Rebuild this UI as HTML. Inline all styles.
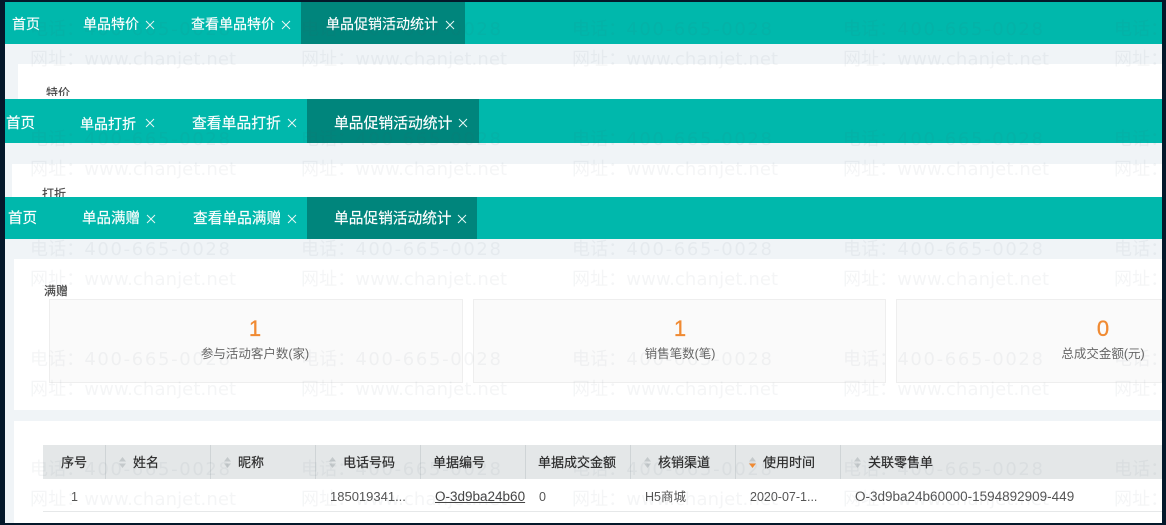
<!DOCTYPE html>
<html><head><meta charset="utf-8">
<style>
*{box-sizing:border-box;margin:0;padding:0}
html,body{width:1166px;height:525px;overflow:hidden;background:#04182a}
body{position:relative;font-family:"Liberation Sans","Noto Sans CJK SC",sans-serif;}
#wrap{position:absolute;left:0;top:0;width:1166px;height:525px;filter:blur(.35px)}
.b{position:absolute}
.t{position:absolute;white-space:nowrap;line-height:20px;-webkit-text-stroke:.15px currentColor}
.tab{color:#fff;font-size:14px;height:20px}
.x{position:absolute;width:10px;height:10px}
.x svg{display:block}
.wm{position:absolute;white-space:nowrap;font-family:"DejaVu Sans","Noto Sans CJK SC",sans-serif;font-size:18px;line-height:24px;color:rgba(60,80,100,.06);pointer-events:none;letter-spacing:.1px}
.wm span{letter-spacing:1.65px}
.th{position:absolute;top:445px;height:34px;border-right:1px solid #cfd4d6}
.h{position:absolute;font-size:13px;color:#2b2b2b;line-height:20px;white-space:nowrap;top:453px;-webkit-text-stroke:.2px currentColor}
.c{position:absolute;font-size:13.5px;color:#555;line-height:20px;white-space:nowrap;top:487px}
.card{position:absolute;top:299px;height:84px;background:#fafafa;border:1px solid #eeeeee}
.n{position:absolute;top:316px;font-size:22px;line-height:26px;color:#f08a32;white-space:nowrap;transform:translateX(-50%);-webkit-text-stroke:.3px currentColor}
.l{position:absolute;top:344px;font-size:12.5px;line-height:20px;color:#666;white-space:nowrap;transform:translateX(-50%)}
.s{position:absolute;width:7px;height:13px}
</style></head><body><div id="wrap">

<div class="b" style="left:5px;top:2px;width:1157px;height:521px;background:#f0f4f7"></div>

<!-- first layer -->
<div class="b" style="left:18px;top:64px;width:1144px;height:35px;background:#fff"></div>
<div class="t" style="left:46px;top:83px;font-size:12px;color:#444;height:13px;overflow:hidden">特价</div>
<div class="b" style="left:5px;top:2px;width:1157px;height:42px;background:#00b8ac"></div>
<div class="b" style="left:301px;top:2px;width:164px;height:42px;background:#00857c"></div>
<div class="t tab" style="left:12px;top:14px">首页</div>
<div class="t tab" style="left:83px;top:14px">单品特价</div>
<div class="t tab" style="left:191px;top:14px">查看单品特价</div>
<div class="t tab" style="left:326px;top:14px">单品促销活动统计</div>
<div class="x" style="left:145px;top:20px"><svg width="10" height="10"><path d="M1 1L9 9M9 1L1 9" stroke="#e6f7f5" stroke-width="1"/></svg></div>
<div class="x" style="left:281px;top:20px"><svg width="10" height="10"><path d="M1 1L9 9M9 1L1 9" stroke="#e6f7f5" stroke-width="1"/></svg></div>
<div class="x" style="left:445px;top:20px"><svg width="10" height="10"><path d="M1 1L9 9M9 1L1 9" stroke="#e6f7f5" stroke-width="1"/></svg></div>

<!-- second layer -->
<div class="b" style="left:12px;top:164px;width:1150px;height:33px;background:#fff"></div>
<div class="t" style="left:42px;top:184px;font-size:12px;color:#444;height:13px;overflow:hidden">打折</div>
<div class="b" style="left:5px;top:99px;width:1157px;height:44px;background:#00b8ac"></div>
<div class="b" style="left:307px;top:99px;width:172px;height:44px;background:#00857c"></div>
<div class="t tab" style="left:6px;top:114px;font-size:14.5px">首页</div>
<div class="t tab" style="left:80px;top:114px">单品打折</div>
<div class="t tab" style="left:192px;top:114px;font-size:14.8px">查看单品打折</div>
<div class="t tab" style="left:334px;top:114px;font-size:14.8px">单品促销活动统计</div>
<div class="x" style="left:145px;top:118px"><svg width="10" height="10"><path d="M1 1L9 9M9 1L1 9" stroke="#e6f7f5" stroke-width="1"/></svg></div>
<div class="x" style="left:287px;top:118px"><svg width="10" height="10"><path d="M1 1L9 9M9 1L1 9" stroke="#e6f7f5" stroke-width="1"/></svg></div>
<div class="x" style="left:458px;top:118px"><svg width="10" height="10"><path d="M1 1L9 9M9 1L1 9" stroke="#e6f7f5" stroke-width="1"/></svg></div>

<!-- third layer -->
<div class="b" style="left:14px;top:259px;width:1148px;height:151px;background:#fff"></div>
<div class="b" style="left:14px;top:421px;width:1148px;height:102px;background:#fff"></div>
<div class="t" style="left:44px;top:281px;font-size:12px;color:#444">满赠</div>
<div class="b" style="left:5px;top:197px;width:1157px;height:42px;background:#00b8ac"></div>
<div class="b" style="left:307px;top:197px;width:170px;height:42px;background:#00857c"></div>
<div class="t tab" style="left:8px;top:209px;font-size:14.5px">首页</div>
<div class="t tab" style="left:82px;top:209px;font-size:14.5px">单品满赠</div>
<div class="t tab" style="left:193px;top:209px;font-size:14.7px">查看单品满赠</div>
<div class="t tab" style="left:334px;top:209px;font-size:14.7px">单品促销活动统计</div>
<div class="x" style="left:146px;top:214px"><svg width="10" height="10"><path d="M1 1L9 9M9 1L1 9" stroke="#e6f7f5" stroke-width="1"/></svg></div>
<div class="x" style="left:287px;top:214px"><svg width="10" height="10"><path d="M1 1L9 9M9 1L1 9" stroke="#e6f7f5" stroke-width="1"/></svg></div>
<div class="x" style="left:457px;top:214px"><svg width="10" height="10"><path d="M1 1L9 9M9 1L1 9" stroke="#e6f7f5" stroke-width="1"/></svg></div>

<!-- cards -->
<div class="card" style="left:49px;width:414px"></div>
<div class="card" style="left:473px;width:413px"></div>
<div class="card" style="left:896px;width:266px"></div>
<div class="n" style="left:255px">1</div>
<div class="n" style="left:680px">1</div>
<div class="n" style="left:1103px">0</div>
<div class="l" style="left:255px">参与活动客户数(家)</div>
<div class="l" style="left:680px">销售笔数(笔)</div>
<div class="l" style="left:1103px">总成交金额(元)</div>

<!-- table -->
<div class="b" style="left:43px;top:445px;width:1119px;height:34px;background:#e4e7e8"></div>
<div class="th" style="left:43px;width:63px"></div>
<div class="th" style="left:106px;width:105px"></div>
<div class="th" style="left:211px;width:105px"></div>
<div class="th" style="left:316px;width:105px"></div>
<div class="th" style="left:421px;width:105px"></div>
<div class="th" style="left:526px;width:105px"></div>
<div class="th" style="left:631px;width:105px"></div>
<div class="th" style="left:736px;width:105px"></div>
<div class="b" style="left:43px;top:511px;width:1119px;height:1px;background:#e6e8e9"></div>

<div class="h" style="left:61px">序号</div>
<div class="h" style="left:133px">姓名</div>
<div class="h" style="left:238px">昵称</div>
<div class="h" style="left:343px">电话号码</div>
<div class="h" style="left:433px">单据编号</div>
<div class="h" style="left:538px">单据成交金额</div>
<div class="h" style="left:658px">核销渠道</div>
<div class="h" style="left:763px">使用时间</div>
<div class="h" style="left:868px">关联零售单</div>

<svg class="s" style="left:119px;top:456px" viewBox="0 0 7 13"><path d="M3.5 1L7 5.5H0Z" fill="#c4c9cb"/><path d="M3.5 12L0 7.500H7Z" fill="#c4c9cb"/></svg>
<svg class="s" style="left:224px;top:456px" viewBox="0 0 7 13"><path d="M3.5 1L7 5.5H0Z" fill="#c4c9cb"/><path d="M3.5 12L0 7.500H7Z" fill="#c4c9cb"/></svg>
<svg class="s" style="left:329px;top:456px" viewBox="0 0 7 13"><path d="M3.5 1L7 5.5H0Z" fill="#c4c9cb"/><path d="M3.5 12L0 7.500H7Z" fill="#c4c9cb"/></svg>
<svg class="s" style="left:644px;top:456px" viewBox="0 0 7 13"><path d="M3.5 1L7 5.5H0Z" fill="#c4c9cb"/><path d="M3.5 12L0 7.500H7Z" fill="#c4c9cb"/></svg>
<svg class="s" style="left:749px;top:456px" viewBox="0 0 7 13"><path d="M3.5 1L7 5.5H0Z" fill="#c4c9cb"/><path d="M3.5 12L0 7.500H7Z" fill="#f08a32"/></svg>
<svg class="s" style="left:854px;top:456px" viewBox="0 0 7 13"><path d="M3.5 1L7 5.5H0Z" fill="#c4c9cb"/><path d="M3.5 12L0 7.500H7Z" fill="#c4c9cb"/></svg>

<div class="c" style="left:71px;font-size:12.5px">1</div>
<div class="c" style="left:330px;font-size:13px">185019341...</div>
<div class="c" style="left:435px;text-decoration:underline;color:#444">O-3d9ba24b60</div>
<div class="c" style="left:539px;font-size:12.5px">0</div>
<div class="c" style="left:645px;font-size:12.5px">H5商城</div>
<div class="c" style="left:750px;font-size:12.5px">2020-07-1...</div>
<div class="c" style="left:855px">O-3d9ba24b60000-1594892909-449</div>

<!-- watermark -->
<div class="wm" style="left:30px;top:18px">电话：<span>400-665-0028</span></div><div class="wm" style="left:301px;top:18px">电话：<span>400-665-0028</span></div><div class="wm" style="left:572px;top:18px">电话：<span>400-665-0028</span></div><div class="wm" style="left:843px;top:18px">电话：<span>400-665-0028</span></div><div class="wm" style="left:1114px;top:18px">电话：<span>400-665-0028</span></div>
<div class="wm" style="left:30px;top:48px">网址：www.chanjet.net</div><div class="wm" style="left:301px;top:48px">网址：www.chanjet.net</div><div class="wm" style="left:572px;top:48px">网址：www.chanjet.net</div><div class="wm" style="left:843px;top:48px">网址：www.chanjet.net</div><div class="wm" style="left:1114px;top:48px">网址：www.chanjet.net</div>
<div class="wm" style="left:30px;top:128px">电话：<span>400-665-0028</span></div><div class="wm" style="left:301px;top:128px">电话：<span>400-665-0028</span></div><div class="wm" style="left:572px;top:128px">电话：<span>400-665-0028</span></div><div class="wm" style="left:843px;top:128px">电话：<span>400-665-0028</span></div><div class="wm" style="left:1114px;top:128px">电话：<span>400-665-0028</span></div>
<div class="wm" style="left:30px;top:158px">网址：www.chanjet.net</div><div class="wm" style="left:301px;top:158px">网址：www.chanjet.net</div><div class="wm" style="left:572px;top:158px">网址：www.chanjet.net</div><div class="wm" style="left:843px;top:158px">网址：www.chanjet.net</div><div class="wm" style="left:1114px;top:158px">网址：www.chanjet.net</div>
<div class="wm" style="left:30px;top:238px">电话：<span>400-665-0028</span></div><div class="wm" style="left:301px;top:238px">电话：<span>400-665-0028</span></div><div class="wm" style="left:572px;top:238px">电话：<span>400-665-0028</span></div><div class="wm" style="left:843px;top:238px">电话：<span>400-665-0028</span></div><div class="wm" style="left:1114px;top:238px">电话：<span>400-665-0028</span></div>
<div class="wm" style="left:30px;top:268px">网址：www.chanjet.net</div><div class="wm" style="left:301px;top:268px">网址：www.chanjet.net</div><div class="wm" style="left:572px;top:268px">网址：www.chanjet.net</div><div class="wm" style="left:843px;top:268px">网址：www.chanjet.net</div><div class="wm" style="left:1114px;top:268px">网址：www.chanjet.net</div>
<div class="wm" style="left:30px;top:348px">电话：<span>400-665-0028</span></div><div class="wm" style="left:301px;top:348px">电话：<span>400-665-0028</span></div><div class="wm" style="left:572px;top:348px">电话：<span>400-665-0028</span></div><div class="wm" style="left:843px;top:348px">电话：<span>400-665-0028</span></div><div class="wm" style="left:1114px;top:348px">电话：<span>400-665-0028</span></div>
<div class="wm" style="left:30px;top:378px">网址：www.chanjet.net</div><div class="wm" style="left:301px;top:378px">网址：www.chanjet.net</div><div class="wm" style="left:572px;top:378px">网址：www.chanjet.net</div><div class="wm" style="left:843px;top:378px">网址：www.chanjet.net</div><div class="wm" style="left:1114px;top:378px">网址：www.chanjet.net</div>
<div class="wm" style="left:30px;top:458px">电话：<span>400-665-0028</span></div><div class="wm" style="left:301px;top:458px">电话：<span>400-665-0028</span></div><div class="wm" style="left:572px;top:458px">电话：<span>400-665-0028</span></div><div class="wm" style="left:843px;top:458px">电话：<span>400-665-0028</span></div><div class="wm" style="left:1114px;top:458px">电话：<span>400-665-0028</span></div>
<div class="wm" style="left:30px;top:488px">网址：www.chanjet.net</div><div class="wm" style="left:301px;top:488px">网址：www.chanjet.net</div><div class="wm" style="left:572px;top:488px">网址：www.chanjet.net</div><div class="wm" style="left:843px;top:488px">网址：www.chanjet.net</div><div class="wm" style="left:1114px;top:488px">网址：www.chanjet.net</div>

<!-- frame -->
<div class="b" style="left:0;top:0;width:5px;height:525px;background:#04182a"></div>
<div class="b" style="left:1162px;top:0;width:4px;height:525px;background:#04182a"></div>
<div class="b" style="left:0;top:0;width:1166px;height:2px;background:#04182a"></div>
<div class="b" style="left:0;top:523px;width:1166px;height:2px;background:#04182a"></div>
</div></body></html>
